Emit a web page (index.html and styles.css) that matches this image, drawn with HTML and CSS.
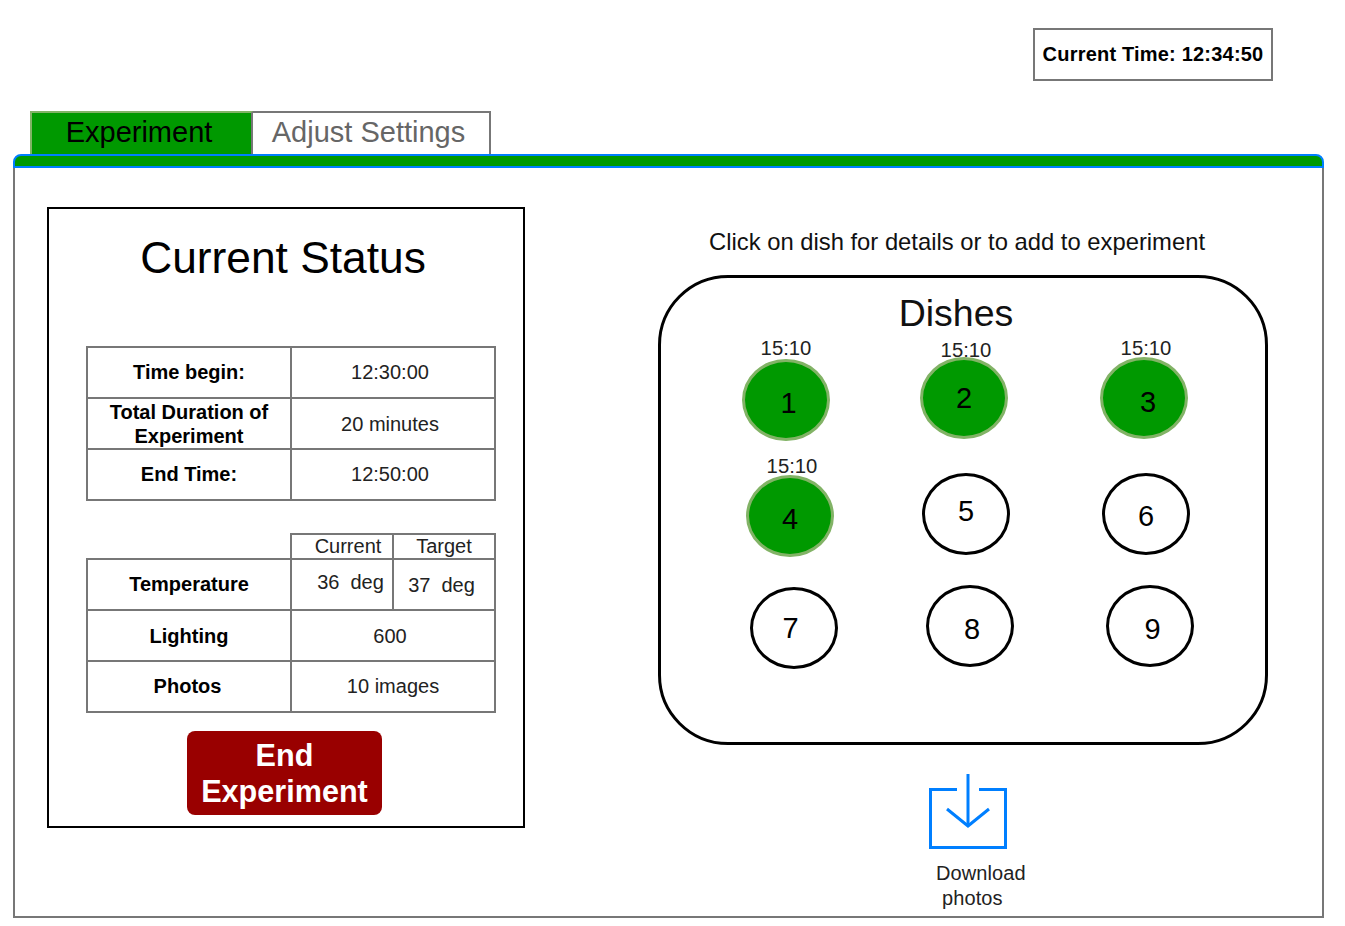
FILE: index.html
```html
<!DOCTYPE html>
<html lang="en">
<head>
  <meta charset="UTF-8">
  <title>Experiment</title>
  <link rel="stylesheet" href="styles.css">
</head>
<body>
  <header class="top">
    <div class="clock">Current Time: 12:34:50</div>
  </header>

  <nav class="tabs">
    <a class="tab tab-active">Experiment</a>
    <a class="tab">Adjust Settings</a>
  </nav>

  <main class="panel">
    <div class="panel-bar"></div>
    <div class="panel-body">

      <section class="status">
        <h1 class="status-title">Current Status</h1>

        <table class="info">
          <tr class="up">
            <th>Time begin:</th>
            <td class="val">12:30:00</td>
          </tr>
          <tr>
            <th>Total Duration of Experiment</th>
            <td class="val">20 minutes</td>
          </tr>
          <tr class="up">
            <th>End Time:</th>
            <td class="val">12:50:00</td>
          </tr>
        </table>

        <table class="info readings">
          <tr class="readings-head up">
            <th class="blank"></th>
            <td class="current-head">Current</td>
            <td>Target</td>
          </tr>
          <tr class="up">
            <th>Temperature</th>
            <td class="current-val">36&nbsp; deg</td>
            <td class="target-val">37&nbsp; deg</td>
          </tr>
          <tr>
            <th>Lighting</th>
            <td class="val" colspan="2">600</td>
          </tr>
          <tr class="up">
            <th class="photos-label">Photos</th>
            <td colspan="2">10 images</td>
          </tr>
        </table>

        <button class="end-btn" type="button">End<br>Experiment</button>
      </section>

      <section class="side">
        <p class="hint">Click on dish for details or to add to experiment</p>

        <div class="dishes">
          <h2 class="dishes-title">Dishes</h2>
          <div class="dish-grid">
            <div class="dish on d1"><span class="dish-time">15:10</span><span class="num">1</span></div>
            <div class="dish on d2"><span class="dish-time">15:10</span><span class="num">2</span></div>
            <div class="dish on d3"><span class="dish-time">15:10</span><span class="num">3</span></div>
            <div class="dish on d4"><span class="dish-time">15:10</span><span class="num">4</span></div>
            <div class="dish d5"><span class="num">5</span></div>
            <div class="dish d6"><span class="num">6</span></div>
            <div class="dish d7"><span class="num">7</span></div>
            <div class="dish d8"><span class="num">8</span></div>
            <div class="dish d9"><span class="num">9</span></div>
          </div>
        </div>

        <a class="download">
          <svg class="download-icon" width="82" height="79" viewBox="0 0 82 79" fill="none" stroke="#007fff" stroke-width="3">
            <path d="M30 17.5H3.5V75.5H78.5V17.5H52"/>
            <path d="M41 2V54"/>
            <path d="M20 37L41 54L62 37"/>
          </svg>
          <span class="download-line">Download</span>
          <span class="download-line second">photos</span>
        </a>
      </section>

    </div>
  </main>
</body>
</html>
```

FILE: styles.css
```css
body {
  margin: 0;
  font-family: "Liberation Sans", Arial, sans-serif;
  color: #000;
  background-color: #fff;
}

/* clock */
.top {
  display: flex;
  justify-content: flex-end;
  padding: 28px 72px 0 0;
}

.clock {
  box-sizing: border-box;
  width: 240px;
  height: 53px;
  border: 2px solid #777;
  font-size: 20px;
  font-weight: bold;
  letter-spacing: 0.2px;
  line-height: 49px;
  text-align: center;
}

/* tabs */
.tabs {
  display: flex;
  margin: 30px 0 0 30px;
}

.tab {
  box-sizing: border-box;
  height: 43px;
  padding-right: 5px;
  border: 2px solid #777;
  border-bottom: none;
  font-size: 29px;
  line-height: 38px;
  text-align: center;
  color: #666;
}

.tab-active {
  width: 223px;
  background-color: #009900;
  border-color: #82b366;
  border-right-color: #777;
  color: #000;
}

.tab:not(.tab-active) {
  width: 238px;
  border-left: none;
}

/* panel */
.panel {
  width: 1311px;
  margin-left: 13px;
}

.panel-bar {
  box-sizing: border-box;
  height: 14px;
  background-color: #009900;
  border: 2px solid #007fff;
  border-radius: 8px 8px 0 0;
}

.panel-body {
  box-sizing: border-box;
  display: flex;
  height: 750px;
  padding: 39px 0 0 32px;
  border: 2px solid #777;
  border-top: none;
}

/* left box */
.status {
  box-sizing: border-box;
  width: 478px;
  height: 621px;
  padding: 0 0 0 37px;
  border: 2px solid #000;
}

.status-title {
  width: 394px;
  margin: 22px 0 61px;
  font-size: 44.3px;
  font-weight: normal;
  line-height: 54px;
  text-align: center;
}

.info {
  width: 410px;
  border-collapse: collapse;
  table-layout: fixed;
  font-size: 20px;
}

.info tr {
  height: 51px;
}

.info th,
.info td {
  padding: 0;
  border: 2px solid #777;
  line-height: 24px;
  text-align: center;
  color: #222;
}

.info th {
  width: 202px;
  color: #000;
}

.info .up th,
.info .up td {
  padding-bottom: 2px;
}

.info .val {
  padding-right: 6px;
}

.readings {
  margin-top: 32px;
}

.readings th {
  width: 203px;
}

.info .readings-head {
  height: 25px;
}

.info .readings-head td {
  line-height: 20px;
}

.info .blank {
  border-top: none;
  border-left: none;
}

.info .up .current-head {
  padding-left: 12px;
}

.info .up .current-val {
  padding: 0 0 6px 17px;
}

.info .up .target-val {
  padding: 0 5px 0 0;
}

.info .up .photos-label {
  padding-right: 3px;
}

.end-btn {
  display: block;
  width: 195px;
  height: 84px;
  margin: 18px 0 0 101px;
  padding: 0;
  border: none;
  border-radius: 8px;
  background-color: #990000;
  font-family: inherit;
  font-size: 30.6px;
  font-weight: bold;
  line-height: 36px;
  color: #fff;
}

/* right side */
.side {
  width: 610px;
  margin-left: 133px;
}

.hint {
  margin: 22px 0 20px;
  padding-right: 12px;
  font-size: 23.8px;
  line-height: 26px;
  text-align: center;
  color: #111;
}

.dishes {
  box-sizing: border-box;
  height: 470px;
  padding-top: 14px;
  border: 3px solid #000;
  border-radius: 70px;
}

.dishes-title {
  margin: 0 0 23px;
  padding-right: 14px;
  font-size: 37.5px;
  font-weight: normal;
  line-height: 42px;
  text-align: center;
  color: #111;
}

.dish-grid {
  display: grid;
  grid-template-columns: repeat(3, 180px);
  grid-template-rows: 116px 112px 84px;
  align-items: start;
  margin-left: 81px;
}

.dish {
  position: relative;
  box-sizing: border-box;
  display: flex;
  justify-content: center;
  align-items: center;
  width: 88px;
  height: 82px;
  border: 3px solid #000;
  border-radius: 50%;
  background-color: #fff;
  font-size: 29px;
}

.dish.on {
  background-color: #009900;
  border-color: #82b366;
}

.dish-time {
  position: absolute;
  bottom: 100%;
  left: -3px;
  width: 88px;
  margin-bottom: 2px;
  font-size: 20.3px;
  line-height: 23px;
  text-align: center;
  color: #222;
}

.num {
  position: relative;
  z-index: 1;
}

/* each dish was placed by hand, so they sit a little off the grid */
.d1 { margin-top: 2px; padding: 7px 0 0 5px; }
.d2 { margin-left: -2px; }
.d3 { margin-left: -2px; padding: 8px 0 0 8px; }
.d4 { margin: 2px 0 0 4px; padding: 6px 0 0 0; }
.d5 { padding: 0 0 6px 0; }
.d6 { padding: 5px 0 0 0; }
.d7 { margin: 2px 0 0 8px; padding: 2px 7px 2px 0; }
.d8 { margin-left: 4px; padding: 6px 0 0 4px; }
.d9 { margin-left: 4px; padding: 6px 0 0 5px; }

.d2 .dish-time { margin-bottom: -2px; left: -1px; }
.d3 .dish-time { margin-bottom: 0; left: -1px; }
.d4 .dish-time { margin-bottom: 0; left: -1px; }

.download {
  display: block;
  margin: 27px 0 0 269px;
  font-size: 20px;
  letter-spacing: 0.1px;
  line-height: 25px;
  color: #222;
}

.download-icon {
  display: block;
  margin-bottom: 10px;
}

.download-line {
  display: block;
  margin-left: 9px;
}

.download-line.second {
  margin-left: 15px;
}
```
